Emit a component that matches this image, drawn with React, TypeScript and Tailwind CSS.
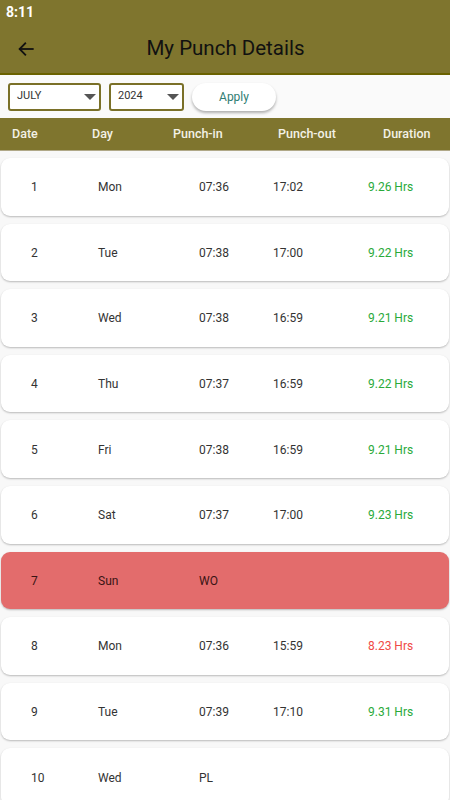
import React from "react";

type Row = { d: string; day: string; pin: string; pout: string; dur: string; durColor?: "g" | "r"; red?: boolean };

const rows: Row[] = [
  { d: "1", day: "Mon", pin: "07:36", pout: "17:02", dur: "9.26 Hrs", durColor: "g" },
  { d: "2", day: "Tue", pin: "07:38", pout: "17:00", dur: "9.22 Hrs", durColor: "g" },
  { d: "3", day: "Wed", pin: "07:38", pout: "16:59", dur: "9.21 Hrs", durColor: "g" },
  { d: "4", day: "Thu", pin: "07:37", pout: "16:59", dur: "9.22 Hrs", durColor: "g" },
  { d: "5", day: "Fri", pin: "07:38", pout: "16:59", dur: "9.21 Hrs", durColor: "g" },
  { d: "6", day: "Sat", pin: "07:37", pout: "17:00", dur: "9.23 Hrs", durColor: "g" },
  { d: "7", day: "Sun", pin: "WO", pout: "", dur: "", red: true },
  { d: "8", day: "Mon", pin: "07:36", pout: "15:59", dur: "8.23 Hrs", durColor: "r" },
  { d: "9", day: "Tue", pin: "07:39", pout: "17:10", dur: "9.31 Hrs", durColor: "g" },
  { d: "10", day: "Wed", pin: "PL", pout: "", dur: "" },
];

function Caret() {
  return (
    <svg width="12" height="6" viewBox="0 0 12 6">
      <path d="M0 0 L12 0 L6 6 Z" fill="#555" />
    </svg>
  );
}

export default function App() {
  return (
    <div className="w-[450px] h-[800px] overflow-hidden bg-[#f8f8f8]" style={{ fontFamily: "Roboto, 'Noto Sans', sans-serif" }}>
      {/* status bar + app bar */}
      <div className="bg-[#7f752e] border-b-2 border-[#6a6200]">
        <div className="h-[24px] flex items-center pl-[6px] text-white font-bold text-[14px]">8:11</div>
        <div className="h-[49px] relative flex items-center">
          <svg className="absolute left-[17px]" width="18" height="18" viewBox="0 0 24 24" fill="none" stroke="#111" strokeWidth="2.4" strokeLinecap="square">
            <path d="M21 12H4" />
            <path d="M11 4.5L3.5 12L11 19.5" />
          </svg>
          <div className="w-full text-center text-[20.5px] text-[#111] pl-[1px]">My Punch Details</div>
        </div>
      </div>
      {/* filter row */}
      <div className="h-[43px] bg-[#fafafa] flex items-center pl-[8px]">
        <div className="w-[93px] h-[28px] border-2 border-[#7a7028] rounded-[3px] flex items-center justify-between pl-[7px] pr-[3px] text-[11px] text-[#333] bg-white">
          <span>JULY</span>
          <Caret />
        </div>
        <div className="ml-[8px] w-[75px] h-[28px] border-2 border-[#7a7028] rounded-[3px] flex items-center justify-between pl-[7px] pr-[3px] text-[11px] text-[#333] bg-white">
          <span>2024</span>
          <Caret />
        </div>
        <div className="ml-[8px] w-[84px] h-[28px] rounded-full bg-white shadow-[0_2px_3px_rgba(0,0,0,0.3)] flex items-center justify-center text-[12px] text-[#2f7d72]">
          Apply
        </div>
      </div>
      {/* table header */}
      <div className="h-[33px] bg-[#7f752e] flex items-center text-[12.5px] font-medium text-[#f3f1e6] border-b border-[#b0a888]">
        <span className="w-[92px] pl-[12px]">Date</span>
        <span className="w-[81px]">Day</span>
        <span className="w-[105px]">Punch-in</span>
        <span className="w-[105px]">Punch-out</span>
        <span>Duration</span>
      </div>
      {/* rows */}
      <div className="pt-[7px] px-[1px] flex flex-col gap-[8px]">
        {rows.map((r) => (
          <div
            key={r.d}
            className={`h-[57.6px] shrink-0 rounded-[9px] flex items-center pl-[30px] pt-[1px] text-[12px] shadow-[0_1px_2px_rgba(0,0,0,0.25)] ${
              r.red ? "bg-[#e36c6c] text-[#3a1414]" : "bg-white text-[#333]"
            }`}
          >
            <span className="w-[67px]">{r.d}</span>
            <span className="w-[101px]">{r.day}</span>
            <span className="w-[74px]">{r.pin}</span>
            <span className="w-[95px]">{r.pout}</span>
            <span className={r.durColor === "g" ? "text-[#2aaa3a]" : "text-[#f04a45]"}>{r.dur}</span>
          </div>
        ))}
      </div>
    </div>
  );
}
